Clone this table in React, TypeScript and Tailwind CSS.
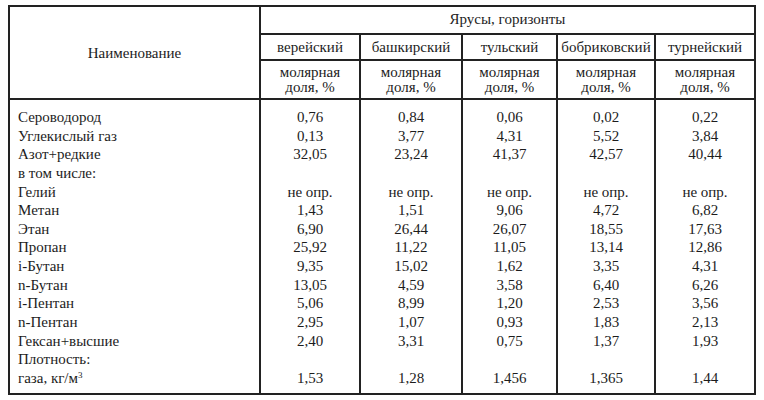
const horizons = ["верейский", "башкирский", "тульский", "бобриковский", "турнейский"];

const colWidths = ["w-[100px]", "w-[102px]", "w-[95px]", "w-[98px]", "w-[100px]"];

interface GasRow {
  name: React.ReactNode;
  values: string[];
}

const rows: GasRow[] = [
  { name: "Сероводород", values: ["0,76", "0,84", "0,06", "0,02", "0,22"] },
  { name: "Углекислый газ", values: ["0,13", "3,77", "4,31", "5,52", "3,84"] },
  { name: "Азот+редкие", values: ["32,05", "23,24", "41,37", "42,57", "40,44"] },
  { name: "в том числе:", values: ["", "", "", "", ""] },
  { name: "Гелий", values: ["не опр.", "не опр.", "не опр.", "не опр.", "не опр."] },
  { name: "Метан", values: ["1,43", "1,51", "9,06", "4,72", "6,82"] },
  { name: "Этан", values: ["6,90", "26,44", "26,07", "18,55", "17,63"] },
  { name: "Пропан", values: ["25,92", "11,22", "11,05", "13,14", "12,86"] },
  { name: "i-Бутан", values: ["9,35", "15,02", "1,62", "3,35", "4,31"] },
  { name: "n-Бутан", values: ["13,05", "4,59", "3,58", "6,40", "6,26"] },
  { name: "i-Пентан", values: ["5,06", "8,99", "1,20", "2,53", "3,56"] },
  { name: "n-Пентан", values: ["2,95", "1,07", "0,93", "1,83", "2,13"] },
  { name: "Гексан+высшие", values: ["2,40", "3,31", "0,75", "1,37", "1,93"] },
  { name: "Плотность:", values: ["", "", "", "", ""] },
  {
    name: (
      <>
        газа, кг/м<sup className="text-[9px]">3</sup>
      </>
    ),
    values: ["1,53", "1,28", "1,456", "1,365", "1,44"],
  },
];

const App = () => {
  return (
    <div className="h-[400px] w-[764px] bg-white pl-[8px] pt-[5px] font-['Liberation_Serif',serif] text-[15px] text-[#1c1c1c]">
      <div className="w-[748px] border-2 border-[#222]">
        {/* header */}
        <div className="flex border-b-2 border-[#222]">
          <div className="flex w-[249px] items-center justify-center pt-[1px]">
            Наименование
          </div>
          <div className="flex flex-col">
            <div className="flex h-[28px] items-center justify-center border-b-2 border-l-2 border-[#222] pb-[1px]">
              Ярусы, горизонты
            </div>
            <div className="flex h-[26px] border-b-2 border-[#222]">
              {horizons.map((h, i) => (
                <div
                  key={h}
                  className={`${colWidths[i]} flex items-center justify-center whitespace-nowrap border-l-2 border-[#222]`}
                >
                  {h}
                </div>
              ))}
            </div>
            <div className="flex h-[37px]">
              {horizons.map((h, i) => (
                <div
                  key={h}
                  className={`${colWidths[i]} flex flex-col items-center justify-center border-l-2 border-[#222] leading-[14.5px]`}
                >
                  <span>молярная</span>
                  <span>доля, %</span>
                </div>
              ))}
            </div>
          </div>
        </div>

        {/* body */}
        <div className="flex leading-[18.65px]">
          <div className="w-[249px] pb-[5px] pl-[8px] pt-[8px]">
            {rows.map((r, i) => (
              <div key={i} className="h-[18.65px] whitespace-nowrap">
                {r.name}
              </div>
            ))}
          </div>
          {horizons.map((h, c) => (
            <div
              key={h}
              className={`${colWidths[c]} border-l-2 border-[#222] pb-[5px] pt-[8px] text-center`}
            >
              {rows.map((r, i) => (
                <div key={i} className="h-[18.65px]">
                  {r.values[c]}
                </div>
              ))}
            </div>
          ))}
        </div>
      </div>
    </div>
  );
};

export default App;
